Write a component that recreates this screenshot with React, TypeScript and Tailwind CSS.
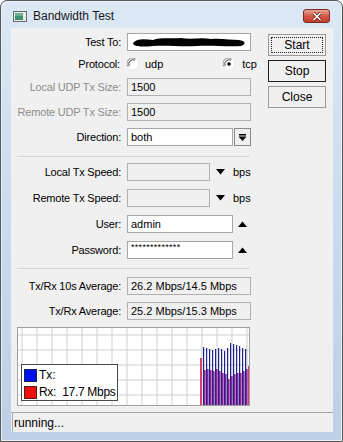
import React from "react";

const font = "font-['Liberation_Sans',Arial,sans-serif]";

// tx/rx bar tops inside the graph (svg coords)
const bars: { tx?: number; rx: number; pink?: boolean }[] = [
  { rx: 30, pink: true },
  { tx: 19, rx: 42 },
  { tx: 20, rx: 41 },
  { tx: 21, rx: 42 },
  { tx: 22, rx: 43 },
  { tx: 21, rx: 41 },
  { tx: 20, rx: 43 },
  { tx: 21, rx: 45 },
  { tx: 23, rx: 46 },
  { tx: 20, rx: 51 },
  { tx: 15, rx: 48 },
  { tx: 16, rx: 46 },
  { tx: 17, rx: 45 },
  { tx: 18, rx: 45 },
  { tx: 20, rx: 43 },
  { tx: 21, rx: 41 },
  { rx: 38, pink: true },
];

function Row({
  label,
  dim,
  mt,
  children,
}: {
  label: string;
  dim?: boolean;
  mt: string;
  children: React.ReactNode;
}) {
  return (
    <div className={`flex items-center h-[18px] ${mt}`}>
      <span
        className={`w-[110px] text-right whitespace-nowrap tracking-[-0.2px] ${dim ? "text-[#8d8d8d]" : "text-black"}`}
      >
        {label}
      </span>
      <div className="ml-[6px] flex items-center h-full">{children}</div>
    </div>
  );
}

function Field({
  w,
  white,
  children,
}: {
  w: string;
  white?: boolean;
  children?: React.ReactNode;
}) {
  return (
    <div
      className={`${w} h-[18px] border flex items-center pl-[3px] whitespace-nowrap overflow-hidden ${
        white ? "bg-white border-[#a3a6ab]" : "bg-[#f0f0f0] border-[#b0b0b0]"
      }`}
    >
      {children}
    </div>
  );
}

function Radio({ on }: { on?: boolean }) {
  return (
    <svg width="12" height="12" viewBox="0 0 12 12">
      <circle cx="6" cy="6" r="5.5" fill="#fff" />
      <path d="M1.2 8.5 A5.2 5.2 0 0 1 8.5 1.2" fill="none" stroke="#808080" strokeWidth="1" />
      <path d="M2.2 7.8 A4.2 4.2 0 0 1 7.8 2.2" fill="none" stroke="#404040" strokeWidth="1" />
      <path d="M3.5 10.8 A5.2 5.2 0 0 0 10.8 3.5" fill="none" stroke="#e8e8e8" strokeWidth="1" />
      {on && <circle cx="6" cy="6" r="1.8" fill="#000" />}
    </svg>
  );
}

function Down() {
  return (
    <svg width="9" height="6" viewBox="0 0 9 6">
      <path d="M0 0 H9 L4.5 5.5 Z" fill="#000" />
    </svg>
  );
}

function Up() {
  return (
    <svg width="9" height="6" viewBox="0 0 9 6">
      <path d="M0 6 H9 L4.5 0.5 Z" fill="#000" />
    </svg>
  );
}

function Btn({ label, variant }: { label: string; variant?: "focus" | "default" }) {
  return (
    <div
      className={`w-[58px] h-[22px] bg-[#f0f0f0] border flex items-center justify-center text-[12px] ${
        variant === "default" ? "border-[#202020]" : "border-[#9a9a9a]"
      }`}
    >
      {variant === "focus" ? (
        <div className="w-[52px] h-[16px] border border-dotted border-[#222] flex items-center justify-center">
          {label}
        </div>
      ) : (
        label
      )}
    </div>
  );
}

export default function App() {
  return (
    <div
      className={`${font} w-[343px] h-[442px] border border-[#5a5a5a] rounded-t-[7px] overflow-hidden flex flex-col bg-gradient-to-b from-[#dce8f5] via-[#c9dbef] to-[#bccfe7] shadow-[inset_0_0_0_1px_#e6eef8] text-[11px] text-black`}
    >
      {/* title bar */}
      <div className="h-[27px] flex items-start pl-[12px] pr-[12px]">
        <svg width="14" height="11" viewBox="0 0 14 11" className="mt-[10px]">
          <rect x="0.5" y="0.5" width="13" height="10" fill="#e8e8e8" stroke="#6a6a6a" />
          <rect x="2" y="2" width="8" height="7" fill="#3f8f6f" />
          <rect x="2" y="2" width="8" height="3" fill="#6fb08f" />
          <rect x="11" y="2" width="1.5" height="3" fill="#fff" />
        </svg>
        <span className="ml-[6px] mt-[8px] text-[12px] leading-[15px] text-[#1a1a1a]">Bandwidth Test</span>
        <div className="ml-auto mt-[8px] w-[27px] h-[14px] rounded-[3px] border border-[#7a2a22] bg-gradient-to-b from-[#e9a597] via-[#d2584a] to-[#c23c2c] flex items-center justify-center">
          <svg width="10" height="9" viewBox="0 0 10 9">
            <path d="M1.5 1 L8.5 8 M8.5 1 L1.5 8" stroke="#5a1c14" strokeWidth="3" />
            <path d="M1.5 1 L8.5 8 M8.5 1 L1.5 8" stroke="#fff" strokeWidth="1.6" />
          </svg>
        </div>
      </div>

      {/* client area */}
      <div className="ml-[10px] w-[322px] h-[404px] bg-[#f0f0f0] flex flex-col">
        <div className="flex">
          <div className="w-[246px] flex flex-col">
            <Row label="Test To:" mt="mt-[5px]">
              <Field w="w-[124px]" white>
                <svg width="118" height="12" viewBox="0 0 118 12">
                  <path
                    d="M2 7 C6 2 14 3 22 4 C30 1 40 3 50 2 C60 4 70 1 80 3 C90 2 100 4 108 4 C114 5 116 8 110 10 C96 11 80 9 66 10 C52 11 36 9 22 10 C12 11 2 11 2 7 Z"
                    fill="#000"
                  />
                </svg>
              </Field>
            </Row>
            <div className="flex items-center h-[16px] mt-[5px]">
              <span className="w-[110px] text-right tracking-[-0.2px]">Protocol:</span>
              <div className="ml-[7px] flex items-center">
                <Radio />
                <span className="ml-[6px]">udp</span>
              </div>
              <div className="ml-[60px] flex items-center">
                <Radio on />
                <span className="ml-[7px]">tcp</span>
              </div>
            </div>
            <Row label="Local UDP Tx Size:" dim mt="mt-[6px]">
              <Field w="w-[124px]">1500</Field>
            </Row>
            <Row label="Remote UDP Tx Size:" dim mt="mt-[7px]">
              <Field w="w-[124px]">1500</Field>
            </Row>
            <Row label="Direction:" mt="mt-[7px]">
              <Field w="w-[106px]" white>
                both
              </Field>
              <div className="ml-[1px] w-[17px] h-[18px] border border-[#8a8a8a] bg-[#f0f0f0] flex items-center justify-center">
                <svg width="9" height="9" viewBox="0 0 9 9">
                  <rect x="1" y="1" width="7" height="1.5" fill="#000" />
                  <path d="M0.5 3.5 H8.5 L4.5 8 Z" fill="#000" />
                </svg>
              </div>
            </Row>

            <div className="mt-[10px] ml-[6px] w-[233px] border-t border-[#d6d6d6]" />

            <Row label="Local Tx Speed:" mt="mt-[6px]">
              <Field w="w-[83px]" />
              <div className="ml-[6px]">
                <Down />
              </div>
              <span className="ml-[8px]">bps</span>
            </Row>
            <Row label="Remote Tx Speed:" mt="mt-[8px]">
              <Field w="w-[83px]" />
              <div className="ml-[6px]">
                <Down />
              </div>
              <span className="ml-[8px]">bps</span>
            </Row>
            <Row label="User:" mt="mt-[8px]">
              <Field w="w-[106px]" white>
                admin
              </Field>
              <div className="ml-[5px]">
                <Up />
              </div>
            </Row>
            <Row label="Password:" mt="mt-[8px]">
              <Field w="w-[106px]" white>
                <span className="text-[9px] leading-[9px] self-start mt-[1px] tracking-[0.3px]">
                  *************
                </span>
              </Field>
              <div className="ml-[5px]">
                <Up />
              </div>
            </Row>

            <div className="mt-[9px] ml-[6px] w-[233px] border-t border-[#d6d6d6]" />

            <Row label="Tx/Rx 10s Average:" mt="mt-[8px]">
              <Field w="w-[124px]">26.2 Mbps/14.5 Mbps</Field>
            </Row>
            <Row label="Tx/Rx Average:" mt="mt-[7px]">
              <Field w="w-[124px]">25.2 Mbps/15.3 Mbps</Field>
            </Row>

            {/* graph */}
            <div className="mt-[7px] ml-[6px] w-[233px] h-[79px] border border-[#a0a0a0] bg-white relative">
              <svg width="231" height="77" viewBox="0 0 231 77" className="block">
                {Array.from({ length: 16 }, (_, k) => (
                  <line key={"v" + k} x1={4 + k * 15} y1="0" x2={4 + k * 15} y2="77" stroke="#cfcfcf" />
                ))}
                {[7, 22, 37, 52, 67].map((y) => (
                  <line key={"h" + y} x1="0" y1={y} x2="231" y2={y} stroke="#cfcfcf" />
                ))}
                {bars.map((b, i) => {
                  const x = 182 + i * 3;
                  if (b.pink) {
                    return <rect key={i} x={x} y={b.rx} width="2" height={77 - b.rx} fill="#d8406e" />;
                  }
                  return (
                    <g key={i}>
                      <rect x={x} y={b.tx} width="1.2" height={77 - (b.tx ?? 0)} fill="#22238a" />
                      <rect x={x + 1} y={b.rx} width="1.6" height={77 - b.rx} fill="#8e2398" />
                    </g>
                  );
                })}
              </svg>
              <div className="absolute left-[3px] top-[36px] w-[97px] h-[37px] border border-[#4a4a4a] bg-white flex flex-col pl-[2px] pt-[3px] gap-[3px]">
                <div className="flex items-center h-[14px]">
                  <div className="w-[13px] h-[13px] bg-[#0010f0] border border-[#1a1a5a]" />
                  <span className="ml-[2px] text-[12px]">Tx:</span>
                </div>
                <div className="flex items-center h-[14px]">
                  <div className="w-[13px] h-[13px] bg-[#f01010] border border-[#5a1a1a]" />
                  <span className="ml-[2px] text-[12px] whitespace-pre tracking-[-0.3px]">Rx:  17.7 Mbps</span>
                </div>
              </div>
            </div>
          </div>

          <div className="ml-[11px] mt-[6px] flex flex-col gap-[4px]">
            <Btn label="Start" variant="focus" />
            <Btn label="Stop" variant="default" />
            <Btn label="Close" />
          </div>
        </div>

        {/* status bar */}
        <div className="mt-auto h-[20px] border-t border-[#a8a8a8] flex">
          <div className="ml-[1px] border-l border-[#a8a8a8] pl-[1px] flex items-center text-[12px]">
            running...
          </div>
        </div>
      </div>
    </div>
  );
}
